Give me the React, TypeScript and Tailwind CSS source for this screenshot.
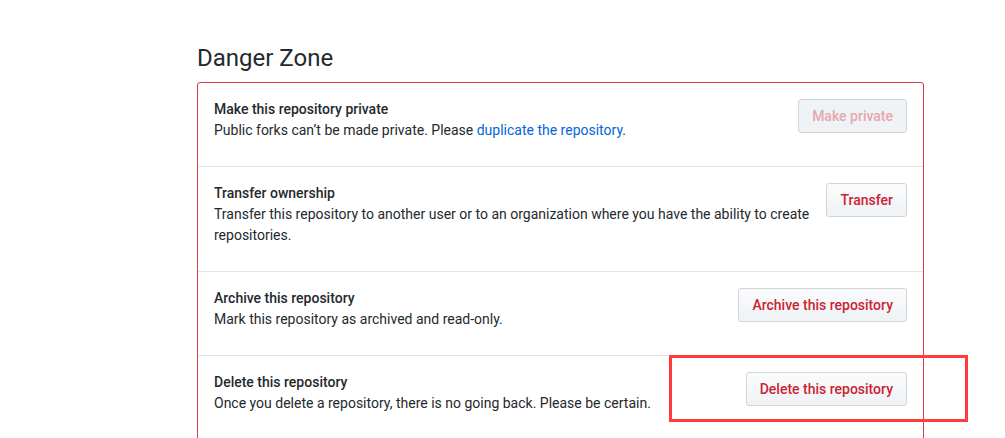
import React from "react";

type Row = {
  title: string;
  desc: React.ReactNode;
  action: string;
  disabled?: boolean;
};

const rows: Row[] = [
  {
    title: "Make this repository private",
    desc: (
      <>
        Public forks can’t be made private. Please{" "}
        <a href="#" className="text-[#0366d6]">
          duplicate the repository
        </a>
        .
      </>
    ),
    action: "Make private",
    disabled: true,
  },
  {
    title: "Transfer ownership",
    desc: "Transfer this repository to another user or to an organization where you have the ability to create repositories.",
    action: "Transfer",
  },
  {
    title: "Archive this repository",
    desc: "Mark this repository as archived and read-only.",
    action: "Archive this repository",
  },
  {
    title: "Delete this repository",
    desc: "Once you delete a repository, there is no going back. Please be certain.",
    action: "Delete this repository",
  },
];

const DangerButton = ({ label, disabled }: { label: string; disabled?: boolean }) => {
  if (disabled) {
    return (
      <button
        disabled
        className="shrink-0 rounded-[3px] border border-[#d1d5da] bg-[#eff3f6] px-[13px] py-[6px] text-sm leading-5 font-medium text-[#e6a7ad] cursor-default"
      >
        {label}
      </button>
    );
  }
  return (
    <button className="shrink-0 rounded-[3px] border border-[#d1d5da] bg-gradient-to-b from-[#fafbfc] to-[#eff3f6] px-[13px] py-[6px] text-sm leading-5 font-medium text-[#cb2431]">
      {label}
    </button>
  );
};

export default function App() {
  return (
    <div
      className="min-h-screen bg-white text-[#24292e]"
      style={{ fontFamily: "Roboto, 'Liberation Sans', sans-serif" }}
    >
      <div className="ml-[197px] w-[727px] pt-[43px]">
        <h2 className="mb-[9px] text-2xl leading-[30px] font-normal">Danger Zone</h2>

        <div className="relative rounded-[3px] border border-[#d73a49]">
          {rows.map((row, i) => (
            <div
              key={row.title}
              className={`flex items-start justify-between gap-4 px-4 pt-4 pb-4 ${
                i > 0 ? "border-t border-[#e1e4e8]" : ""
              }`}
            >
              <div className="text-sm leading-[21px]">
                <div className="font-medium">{row.title}</div>
                <p className="mb-[9px]">{row.desc}</p>
              </div>
              <DangerButton label={row.action} disabled={row.disabled} />
            </div>
          ))}
        </div>
      </div>

      {/* annotation box around the delete button */}
      <div className="pointer-events-none absolute left-[669px] top-[355px] h-[67px] w-[299px] border-[3px] border-[#ff3b3b]" />
    </div>
  );
}
